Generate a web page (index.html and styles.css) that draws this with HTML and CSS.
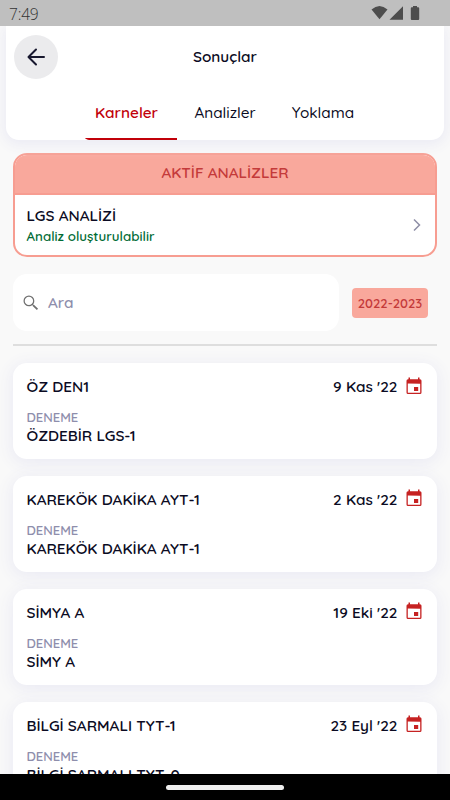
FILE: index.html
```html
<!DOCTYPE html>
<html lang="tr">
<head>
<meta charset="utf-8">
<meta name="viewport" content="width=device-width, initial-scale=1">
<title>Sonuçlar</title>
<link rel="stylesheet" href="styles.css">
</head>
<body>
<svg class="defs" width="0" height="0" aria-hidden="true">
  <symbol id="calendar" viewBox="0 0 16 18"><path fill-rule="evenodd" d="M2.500.5h1.500v1.700h8V.5h1.500v1.700h.5q1.500 0 1.500 1.500v11.800q0 1.500-1.500 1.500H2q-1.500 0-1.500-1.500V3.700q0-1.500 1.500-1.500h.5zM1.800 6.500v9.200h12.400v-9zM8 10h4.200v4H8z"/></symbol>
</svg>
<div class="screen">
  <div class="statusbar">
    <span class="clock">7:49</span>
    <svg class="status-icons" width="50" height="16" viewBox="0 0 50 16">
      <path d="M0.500 4.500Q8.500 -2.500 16.500 4.500L8.500 14.300z"/>
      <path d="M18.500 14.700L32 1.300V14.700z"/>
      <path d="M42 1h4v1.200h1.200q1 0 1 1v10.800q0 1-1 1h-6.400q-1 0-1-1V3.200q0-1 1-1H42z"/>
    </svg>
  </div>
  <header class="header">
    <div class="titlebar">
      <button class="back" aria-label="Geri"><svg width="44" height="44" viewBox="0 0 44 44"><path d="M30 22H15M22 14.500L14.500 22L22 29.500"/></svg></button>
      <h1 class="title">Sonuçlar</h1>
    </div>
    <nav class="tabs">
      <a class="tab tab-active">Karneler</a>
      <a class="tab">Analizler</a>
      <a class="tab">Yoklama</a>
    </nav>
  </header>
  <main class="content">
    <section class="active-box">
      <h2 class="active-title">AKTİF ANALİZLER</h2>
      <div class="active-row">
        <div>
          <div class="active-name">LGS ANALİZİ</div>
          <div class="active-note">Analiz oluşturulabilir</div>
        </div>
        <svg class="chevron" width="10" height="14" viewBox="0 0 10 14"><path d="M2 1.500L7.500 7L2 12.500"/></svg>
      </div>
    </section>
    <div class="filters">
      <div class="search">
        <svg width="20" height="20" viewBox="0 0 24 24"><path d="M15.500 14h-.79l-.28-.27A6.471 6.471 0 0 0 16 9.500 6.500 6.500 0 1 0 9.500 16c1.610 0 3.090-.59 4.230-1.570l.27.280v.79l5 4.990L20.490 19l-4.990-5zm-6 0.500a5 5 0 1 1 0-10a5 5 0 0 1 0 10z"/></svg>
        <span class="placeholder">Ara</span>
      </div>
      <span class="year">2022-2023</span>
    </div>
    <hr class="divider">
    <div class="list">
      <article class="card">
        <div class="card-top"><span class="name">ÖZ DEN1</span><span class="date">9 Kas '22</span><svg class="cal"><use href="#calendar"/></svg></div>
        <div class="label">DENEME</div><div class="exam">ÖZDEBİR LGS-1</div>
      </article>
      <article class="card">
        <div class="card-top"><span class="name">KAREKÖK DAKİKA AYT-1</span><span class="date">2 Kas '22</span><svg class="cal"><use href="#calendar"/></svg></div>
        <div class="label">DENEME</div><div class="exam">KAREKÖK DAKİKA AYT-1</div>
      </article>
      <article class="card">
        <div class="card-top"><span class="name">SİMYA A</span><span class="date">19 Eki '22</span><svg class="cal"><use href="#calendar"/></svg></div>
        <div class="label">DENEME</div><div class="exam">SİMY A</div>
      </article>
      <article class="card">
        <div class="card-top"><span class="name">BİLGİ SARMALI TYT-1</span><span class="date">23 Eyl '22</span><svg class="cal"><use href="#calendar"/></svg></div>
        <div class="label">DENEME</div><div class="exam">BİLGİ SARMALI TYT-0</div>
      </article>
    </div>
  </main>
  <footer class="navbar"><span class="handle"></span></footer>
</div>
</body>
</html>
```
FILE: styles.css
```css
* { box-sizing: border-box; }
body { margin: 0; background: #f9f9f9; color: #0b0b23; font-family: Quicksand, Lato, sans-serif; font-size: 15.300px; font-weight: 500; }
.defs { display: block; }
h1, h2 { margin: 0; font: inherit; }
.screen { width: 450px; height: 800px; overflow: hidden; display: flex; flex-direction: column; background: #f9f9f9; }
.statusbar { flex: none; height: 26px; padding: 0 29px 0 9px; background: #bfbfbf; display: flex; align-items: center; justify-content: space-between; }
.clock { font: 300 15.500px/26px "Open Sans", "Noto Sans", sans-serif; color: #333; padding-top: 2px; letter-spacing: -.2px; }
.status-icons { fill: #4d4d4d; }
.header { flex: none; height: 114px; margin: 0 6px; padding-top: 9px; background: #fff; border-radius: 0 0 13px 13px; box-shadow: 0 3px 13px 2px #ebebf4; clip-path: inset(0 -30px -30px); }
.titlebar { display: grid; grid-template-columns: 44px 1fr 44px; padding: 0 8px; align-items: center; height: 44px; }
.back { width: 44px; height: 44px; padding: 0; border: 0; border-radius: 50%; background: #ebebed; }
.back svg { display: block; fill: none; stroke: #17172e; stroke-width: 2; stroke-linecap: round; stroke-linejoin: round; }
.title { text-align: center; font-weight: 600; line-height: 20px; }
.tabs { height: 61px; display: flex; padding-left: 78px; }
.tab { width: 98px; padding: 24px 2px 0 0; text-align: center; line-height: 20px; }
.tab-active { width: 93px; padding-right: 8px; color: #c10009; font-weight: 600; background: linear-gradient(#c10009, #c10009) bottom / 100% 2px no-repeat; border-radius: 0 0 0 5px; }
.content { flex: 1; min-height: 0; overflow: hidden; padding: 13px 13px 0; }
.active-box { height: 104px; border: 2px solid #f79d91; border-radius: 14px; background: #fff; overflow: hidden; }
.active-title { height: 40px; padding-top: 8px; background: #f9a89c; border-bottom: 2px solid #f79d91; color: #c43a3a; text-align: center; line-height: 20px; font-weight: 600; }
.active-row { display: flex; align-items: center; justify-content: space-between; padding: 11px 13px 0 11.500px; }
.active-name { line-height: 20px; font-weight: 600; }
.active-note { line-height: 20px; font-size: 13.300px; color: #006b35; font-weight: 600; }
.chevron { fill: none; stroke: #8e8ea6; stroke-width: 1.500; margin-bottom: 3px; }
.filters { display: flex; align-items: center; margin-top: 17px; }
.search { width: 326px; height: 57px; border-radius: 14px; background: #fff; display: flex; align-items: center; padding-left: 8px; gap: 7px; }
.search svg { fill: #707070; }
.placeholder { color: #8e8eac; font-weight: 600; }
.year { margin-left: 13px; width: 76px; height: 30px; border-radius: 4px; background: #f9a89c; color: #c43a3a; line-height: 30px; text-align: center; font-size: 13px; font-weight: 600; }
.divider { height: 2px; margin: 13px 0 0; border: 0; background: #dedede; }
.list { display: flex; flex-direction: column; gap: 17px; padding-top: 17px; }
.card { flex: none; height: 95.850px; padding: 14px 15.500px 0 13.500px; border-radius: 14px; background: #fff; box-shadow: 0 3px 16px 2px #ebebf4; }
.card-top { display: flex; align-items: center; height: 20px; line-height: 20px; font-weight: 600; }
.name { flex: 1; white-space: nowrap; }
.date { margin-right: 8px; white-space: nowrap; }
.cal { width: 16px; height: 18px; fill: #c62222; margin-top: -3px; }
.label { margin-top: 11.200px; line-height: 18px; font-size: 13px; color: #8e8eac; font-weight: 600; }
.exam { line-height: 20px; font-weight: 600; white-space: nowrap; }
.navbar { flex: none; height: 26px; background: #000; display: flex; justify-content: center; padding-top: 11px; }
.handle { width: 118px; height: 5px; border-radius: 3px; background: #eee; }
```
